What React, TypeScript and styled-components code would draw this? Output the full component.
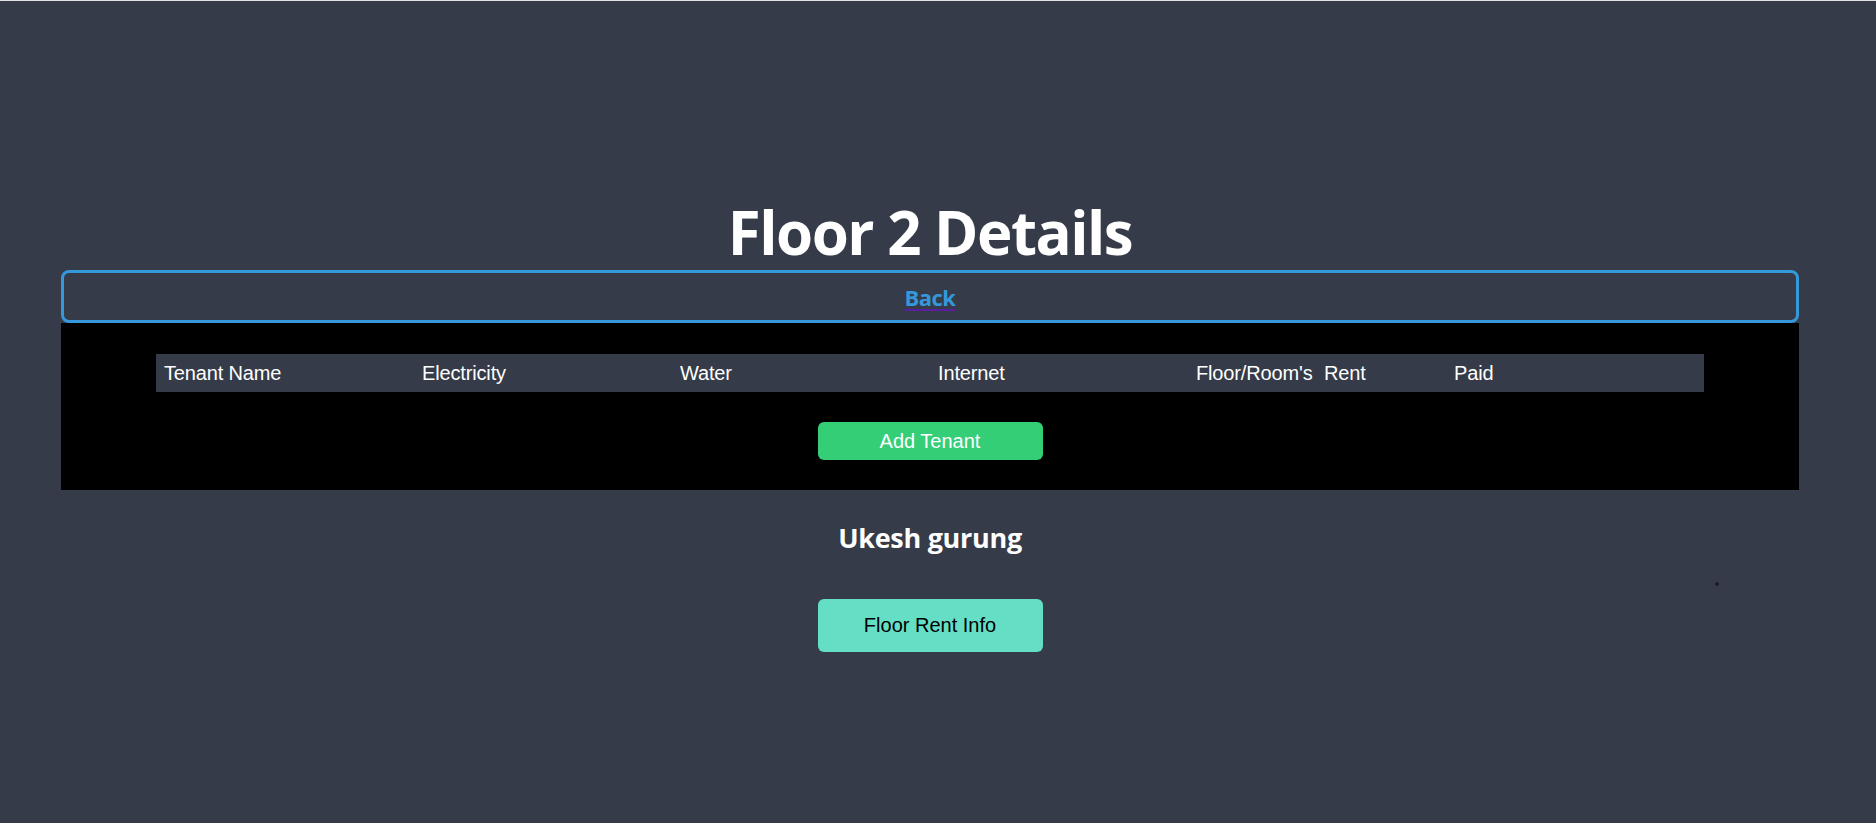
import React from "react";
import styled, { createGlobalStyle } from "styled-components";

const GlobalStyle = createGlobalStyle`
  html, body {
    margin: 0;
    padding: 0;
    background: #353b48;
  }
  body {
    border-top: 1px solid #e2e2e2;
    min-height: 822px;
    font-family: "Liberation Sans", Arial, sans-serif;
  }
`;

const Page = styled.div`
  width: 1738px;
  margin-left: 61px;
  padding-top: 193px;
  display: flex;
  flex-direction: column;
  align-items: stretch;
`;

const Title = styled.h1`
  margin: 0;
  text-align: center;
  color: #ffffff;
  font-family: "Open Sans", "Noto Sans", sans-serif;
  font-weight: 700;
  font-size: 60px;
  line-height: 76px;
  letter-spacing: -1.5px;
`;

const BackButton = styled.button`
  box-sizing: border-box;
  width: 100%;
  height: 53px;
  border: 3px solid #3498db;
  border-radius: 8px;
  background: transparent;
  display: flex;
  align-items: center;
  justify-content: center;
  cursor: pointer;
  padding: 0;
`;

const BackLink = styled.a`
  color: #3498db;
  font-family: "Open Sans", "Noto Sans", sans-serif;
  font-weight: 700;
  font-size: 22px;
  letter-spacing: -0.5px;
  text-decoration: underline;
  text-decoration-color: #5a1ea0;
  text-underline-offset: 3px;
`;

const Panel = styled.section`
  background: #000000;
  padding: 31px 95px 30px;
  display: flex;
  flex-direction: column;
  align-items: center;
  gap: 30px;
`;

const HeaderRow = styled.div`
  width: 100%;
  height: 38px;
  background: #353b48;
  display: grid;
  grid-template-columns: 258px 258px 258px 258px 128px 130px 1fr;
  align-items: center;
`;

const HeaderCell = styled.div`
  padding-left: 8px;
  color: #ffffff;
  font-size: 20px;
  letter-spacing: -0.15px;
  white-space: nowrap;
`;

const ActionButton = styled.button<{ $bg: string; $fg: string; $h: number }>`
  width: 225px;
  height: ${(p) => p.$h}px;
  border: none;
  border-radius: 6px;
  background: ${(p) => p.$bg};
  color: ${(p) => p.$fg};
  font-family: "Liberation Sans", Arial, sans-serif;
  font-size: 20px;
  letter-spacing: 0;
  cursor: pointer;
`;

const TenantSection = styled.div`
  display: flex;
  flex-direction: column;
  align-items: center;
  padding-top: 30px;
`;

const TenantName = styled.h2`
  margin: 0;
  color: #ffffff;
  font-family: "Open Sans", "Noto Sans", sans-serif;
  font-weight: 700;
  font-size: 27px;
  line-height: 36px;
  letter-spacing: -0.3px;
`;

const MarkerRow = styled.div`
  width: 100%;
  height: 0;
  display: flex;
  justify-content: flex-end;
  padding-right: 80px;
  box-sizing: border-box;
`;

const Marker = styled.span`
  display: block;
  width: 4px;
  height: 4px;
  border-radius: 50%;
  background: #1b1e25;
  margin-top: 26px;
`;

const InfoWrap = styled.div`
  padding-top: 43px;
`;

const columns = [
  "Tenant Name",
  "Electricity",
  "Water",
  "Internet",
  "Floor/Room's",
  "Rent",
  "Paid",
];

export default function App() {
  return (
    <>
      <GlobalStyle />
      <Page>
        <Title>Floor 2 Details</Title>
        <BackButton>
          <BackLink>Back</BackLink>
        </BackButton>
        <Panel>
          <HeaderRow>
            {columns.map((c) => (
              <HeaderCell key={c}>{c}</HeaderCell>
            ))}
          </HeaderRow>
          <ActionButton $bg="#33ce76" $fg="#ffffff" $h={38}>
            Add Tenant
          </ActionButton>
        </Panel>
        <TenantSection>
          <TenantName>Ukesh gurung</TenantName>
          <MarkerRow>
            <Marker />
          </MarkerRow>
          <InfoWrap>
            <ActionButton $bg="#64dfc6" $fg="#000000" $h={53}>
              Floor Rent Info
            </ActionButton>
          </InfoWrap>
        </TenantSection>
      </Page>
    </>
  );
}
